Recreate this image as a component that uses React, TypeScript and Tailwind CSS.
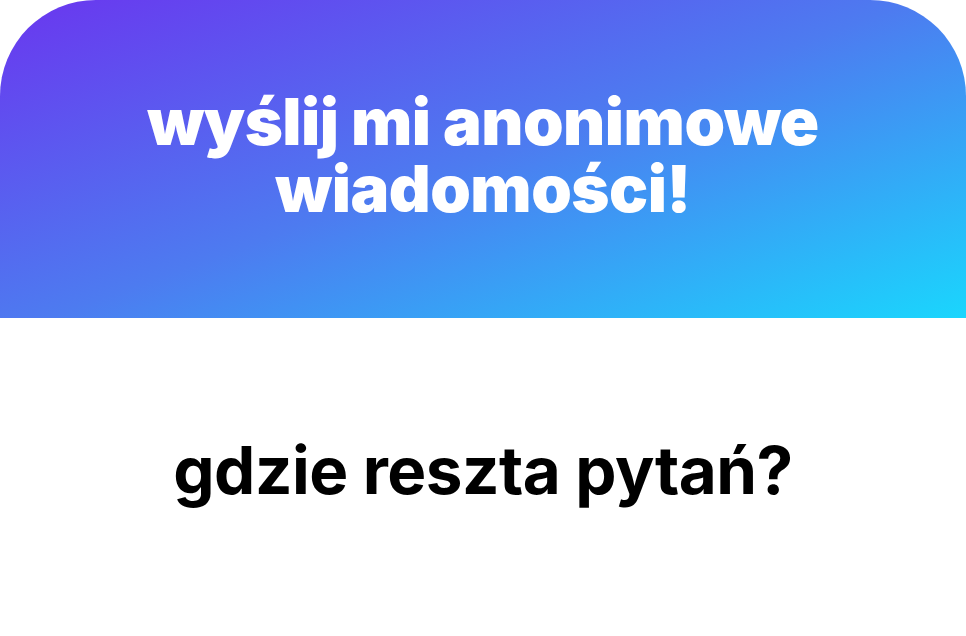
export default function App() {
  return (
    <div className="flex h-[636px] w-[966px] flex-col bg-white font-['Inter',sans-serif]">
      <div className="flex h-[318px] flex-col items-center justify-center rounded-t-[96px] bg-[linear-gradient(160deg,#6a36ef_0%,#4d7bf0_50%,#1ad6fd_100%)] pb-[8px]">
        <h1 className="text-center text-[65px] font-black leading-[67px] tracking-[-0.5px] text-white">
          <span className="block">wyślij mi anonimowe</span>
          <span className="block">wiadomości!</span>
        </h1>
      </div>
      <div className="flex flex-1 items-center justify-center pb-[12px]">
        <p className="text-[65.5px] font-bold tracking-[-0.5px] text-black">gdzie reszta pytań?</p>
      </div>
    </div>
  )
}
